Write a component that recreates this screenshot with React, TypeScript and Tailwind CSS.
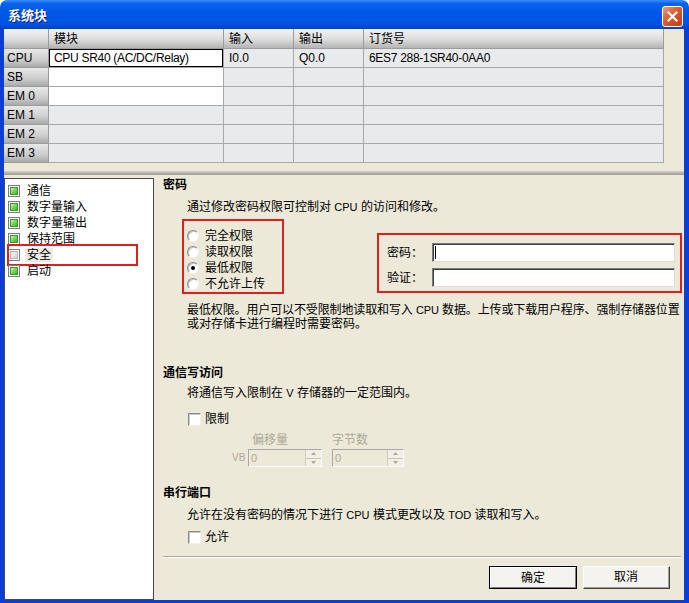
import React from "react";

function TreeIcon({ gray }: { gray?: boolean }) {
  return (
    <span className="w-[12px] h-[12px] border border-[#7d7d7d] bg-white p-[1px] flex shrink-0">
      <span
        className={
          gray
            ? "flex-1 border border-[#b4b4b4] bg-[linear-gradient(135deg,#f4f4f4,#d4d4d4)]"
            : "flex-1 border border-[#3c9a2c] bg-[linear-gradient(135deg,#c8f5a8,#6fd44c_55%,#44b02c)]"
        }
      />
    </span>
  );
}

function Radio({ checked }: { checked?: boolean }) {
  return (
    <span className="w-[12px] h-[12px] rounded-full border border-t-[#8a8a8a] border-l-[#8a8a8a] border-b-[#f4f4f4] border-r-[#f4f4f4] bg-white shadow-[inset_1px_1px_0_#c8c8c8] flex items-center justify-center shrink-0">
      {checked ? <span className="w-[4px] h-[4px] rounded-full bg-black" /> : null}
    </span>
  );
}

function Check() {
  return (
    <span className="w-[13px] h-[13px] border border-t-[#8a8a8a] border-l-[#8a8a8a] border-b-[#f0f0f0] border-r-[#f0f0f0] bg-white shadow-[inset_1px_1px_0_#c8c8c8] shrink-0" />
  );
}

function Spin({ w }: { w: string }) {
  return (
    <div className={`${w} h-[18px] flex border border-t-[#a8a8a8] border-l-[#a8a8a8] border-b-[#ffffff] border-r-[#ffffff] bg-[#ece9d8]`}>
      <div className="flex-1 pl-[2px] text-[11px] leading-[16px] text-[#aca899]">0</div>
      <div className="w-[16px] flex flex-col border-l border-[#d0cdbf]">
        <div className="flex-1 flex items-center justify-center border-b border-[#c8c5b8] bg-[#f2f0e6]">
          <svg width="5" height="3" viewBox="0 0 5 3"><path d="M2.5 0 L5 3 L0 3 Z" fill="#aca899" /></svg>
        </div>
        <div className="flex-1 flex items-center justify-center bg-[#f2f0e6]">
          <svg width="5" height="3" viewBox="0 0 5 3"><path d="M0 0 L5 0 L2.5 3 Z" fill="#aca899" /></svg>
        </div>
      </div>
    </div>
  );
}

function Btn({ label, def }: { label: string; def?: boolean }) {
  return (
    <div
      className={`h-[23px] flex items-center justify-center bg-[#f4f3ee] border ${
        def ? "border-black" : "border-t-white border-l-white border-b-[#404040] border-r-[#404040]"
      }`}
      style={{ width: def ? 88 : 87 }}
    >
      <div
        className={`w-full h-full flex items-center justify-center ${
          def ? "border border-t-white border-l-white border-b-[#808080] border-r-[#808080]" : "border-b border-r border-[#a0a0a0]"
        }`}
      >
        {label}
      </div>
    </div>
  );
}

function L({ children }: { children: React.ReactNode }) {
  return <span className="text-[11px]">{children}</span>;
}

const hdr = "bg-[linear-gradient(to_bottom,#f4f4f4,#dcdcdc_55%,#b4b4b4)] border-r border-b border-[#9c9c9c]";
const rowHdr = "bg-[linear-gradient(to_bottom,#e8e8e8,#cdcdcd_60%,#a9a9a9)] border-r border-b border-[#9c9c9c] pl-[3px] flex items-center";
const cell = "bg-[#e9eaec] border-r border-b border-[#a8a8a8] pl-[5px] flex items-center";
const white = "bg-white border-r border-b border-[#a8a8a8] pl-[5px] flex items-center";

export default function App() {
  const rows = ["SB", "EM 0", "EM 1", "EM 2", "EM 3"];
  const tree = ["通信", "数字量输入", "数字量输出", "保持范围", "安全", "启动"];
  return (
    <div className="w-[689px] h-[603px] flex flex-col font-['Liberation_Sans','Noto_Sans_CJK_SC',sans-serif] text-[12px] leading-[14px] text-black overflow-hidden">
      {/* title bar */}
      <div className="h-[29px] shrink-0 flex items-center pt-[3px] pl-[8px] pr-[6px] rounded-t-[7px] bg-[linear-gradient(to_bottom,#3d8ef8_0%,#0a63ec_12%,#0058e6_40%,#0055e3_80%,#0047d4_94%,#003fc0_100%)]">
        <div className="text-white font-bold text-[13px] [text-shadow:1px_1px_0_#0a1e7a]">系统块</div>
        <div className="ml-auto w-[21px] h-[21px] rounded-[3px] border border-white bg-[linear-gradient(135deg,#f09a78,#e0582c_45%,#c23a18)] flex items-center justify-center">
          <svg width="13" height="13" viewBox="0 0 13 13">
            <path d="M2.5 2.5 L10.5 10.5 M10.5 2.5 L2.5 10.5" stroke="white" strokeWidth="2.2" strokeLinecap="square" />
          </svg>
        </div>
      </div>

      {/* body */}
      <div className="flex-1 flex flex-col bg-[#ece9d8] border-l-[4px] border-r-[5px] border-b-[3px] border-[#0a3ed4] min-h-0">
        {/* table */}
        <div className="w-[660px] grid grid-cols-[45px_175px_70px_70px_300px] grid-rows-[20px_19px_19px_19px_19px_19px_19px] shrink-0">
          <div className={hdr} />
          <div className={`${hdr} pl-[5px] flex items-center`}>模块</div>
          <div className={`${hdr} pl-[5px] flex items-center`}>输入</div>
          <div className={`${hdr} pl-[5px] flex items-center`}>输出</div>
          <div className={`${hdr} pl-[5px] flex items-center`}>订货号</div>

          <div className={rowHdr}>CPU</div>
          <div className={`${white} shadow-[inset_0_0_0_1px_#000] tracking-[-0.3px]`}>CPU SR40 (AC/DC/Relay)</div>
          <div className={cell}>I0.0</div>
          <div className={cell}>Q0.0</div>
          <div className={`${cell} tracking-[-0.3px]`}>6ES7 288-1SR40-0AA0</div>

          {rows.map((r, i) => (
            <React.Fragment key={r}>
              <div className={rowHdr}>{r}</div>
              <div className={i < 2 ? white : cell} />
              <div className={cell} />
              <div className={cell} />
              <div className={cell} />
            </React.Fragment>
          ))}
        </div>

        <div className="h-[8px] shrink-0" />
        <div className="h-[4px] shrink-0 bg-[linear-gradient(to_bottom,#d6d4cc,#b4b2aa_50%,#9e9c96)]" />

        {/* lower area */}
        <div className="flex-1 flex min-h-0">
          {/* tree */}
          <div className="w-[150px] shrink-0 mt-[3px] bg-white border border-[#4a4a4a] pt-[4px] pl-[3px]">
            {tree.map((t, i) => (
              <div key={t} className="relative h-[16px] flex items-center gap-[7px]">
                <TreeIcon gray={i === 4} />
                <span className={i === 4 ? "bg-[#ebeae4] px-[2px] -ml-[2px]" : ""}>{t}</span>
                {i === 4 ? (
                  <div className="absolute left-[-1px] top-[-3px] w-[131px] h-[22px] border-2 border-[#e02020]" />
                ) : null}
              </div>
            ))}
          </div>

          {/* right panel */}
          <div className="flex-1 min-w-0 flex flex-col pl-[9px] pr-[2px]">
            <div className="h-[20px] leading-[20px] font-bold">密码</div>
            <div className="h-[24px] leading-[24px] pl-[24px] whitespace-nowrap">
              通过修改密码权限可控制对 <L>CPU</L> 的访问和修改。
            </div>
            <div className="h-[75px] flex items-start">
              <div className="ml-[19px] w-[102px] h-[75px] shrink-0 border-2 border-[#e02020] pt-[7px] pl-[3px]">
                {[
                  ["完全权限", false],
                  ["读取权限", false],
                  ["最低权限", true],
                  ["不允许上传", false],
                ].map(([t, c]) => (
                  <div key={t as string} className="h-[16px] flex items-center gap-[6px]">
                    <Radio checked={c as boolean} />
                    <span>{t as string}</span>
                  </div>
                ))}
              </div>
              <div className="ml-auto mt-[14px] w-[305px] shrink-0 h-[60px] border-2 border-[#e02020] pt-[8px] pl-[8px] pr-[5px] flex flex-col gap-[6px]">
                <div className="h-[19px] flex items-center">
                  <span className="w-[45px]">密码：</span>
                  <div className="flex-1 h-[19px] bg-white border border-t-[#7a7a7a] border-l-[#7a7a7a] border-b-[#e0ded4] border-r-[#e0ded4] shadow-[inset_1px_1px_0_#404040] flex items-center pl-[2px]">
                    <span className="w-[1px] h-[13px] bg-black" />
                  </div>
                </div>
                <div className="h-[19px] flex items-center">
                  <span className="w-[45px]">验证：</span>
                  <div className="flex-1 h-[19px] bg-white border border-t-[#7a7a7a] border-l-[#7a7a7a] border-b-[#e0ded4] border-r-[#e0ded4] shadow-[inset_1px_1px_0_#404040]" />
                </div>
              </div>
            </div>
            <div className="mt-[9px] pl-[24px] whitespace-nowrap">
              <div className="h-[14px] tracking-[-0.12px]">
                最低权限。用户可以不受限制地读取和写入 <L>CPU</L> 数据。上传或下载用户程序、强制存储器位置
              </div>
              <div className="h-[14px]">或对存储卡进行编程时需要密码。</div>
            </div>

            <div className="mt-[35px] h-[14px] font-bold">通信写访问</div>
            <div className="mt-[6px] h-[14px] pl-[24px] whitespace-nowrap">
              将通信写入限制在 <L>V</L> 存储器的一定范围内。
            </div>
            <div className="mt-[12px] h-[14px] pl-[25px] flex items-center gap-[4px]">
              <Check />
              <span>限制</span>
            </div>
            <div className="mt-[7px] h-[14px] pl-[89px] flex text-[#aca899]">
              <span className="w-[80px]">偏移量</span>
              <span>字节数</span>
            </div>
            <div className="mt-[2px] h-[18px] pl-[69px] flex items-center">
              <span className="w-[16px] text-[10px] text-[#aca899]">VB</span>
              <Spin w="w-[74px]" />
              <div className="w-[10px]" />
              <Spin w="w-[72px]" />
            </div>

            <div className="mt-[19px] h-[14px] font-bold">串行端口</div>
            <div className="mt-[8px] h-[14px] pl-[24px] whitespace-nowrap">
              允许在没有密码的情况下进行 <L>CPU</L> 模式更改以及 <L>TOD</L> 读取和写入。
            </div>
            <div className="mt-[8px] h-[14px] pl-[25px] flex items-center gap-[4px]">
              <Check />
              <span>允许</span>
            </div>
            <div className="mt-[12px] mr-[1px] h-[2px] border-t border-b border-t-[#aca899] border-b-white" />
            <div className="mt-[8px] pr-[12px] flex justify-end gap-[6px]">
              <Btn label="确定" def />
              <Btn label="取消" />
            </div>
          </div>
        </div>
      </div>
    </div>
  );
}
